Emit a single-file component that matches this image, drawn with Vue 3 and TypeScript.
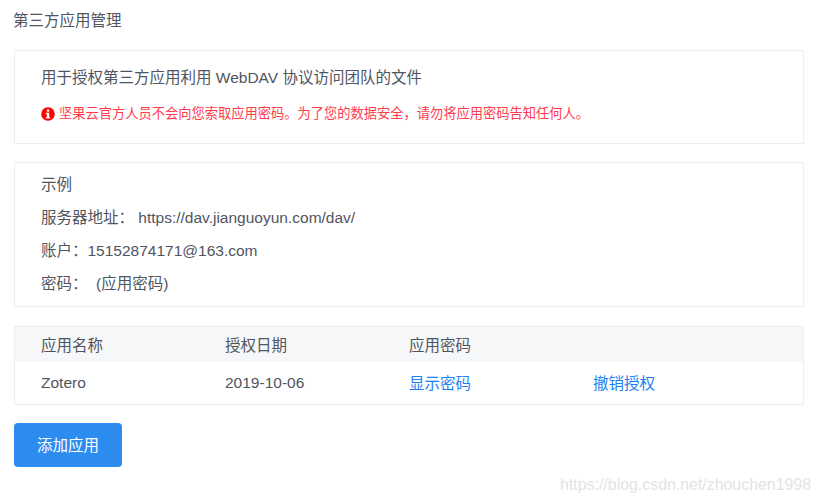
<template>
  <div class="page">
    <h3 class="title">第三方应用管理</h3>

    <section class="box intro">
      <p class="intro-text">用于授权第三方应用利用 WebDAV 协议访问团队的文件</p>
      <p class="warning">
        <svg class="warning-icon" viewBox="0 0 14 14" aria-hidden="true">
          <circle cx="7" cy="7" r="6.8" fill="#ff0000" />
          <rect x="5.8" y="2.5" width="2.4" height="2.2" fill="#fff" />
          <path d="M4.8 5.7h3.4v4.6h1.1v1.3H4.8v-1.3h1V7h-1z" fill="#fff" />
        </svg>
        <span>坚果云官方人员不会向您索取应用密码。为了您的数据安全，请勿将应用密码告知任何人。</span>
      </p>
    </section>

    <section class="box example">
      <p v-for="line in exampleLines" :key="line">{{ line }}</p>
    </section>

    <section class="box table">
      <div class="row head">
        <span v-for="col in columns" :key="col">{{ col }}</span>
        <span></span>
      </div>
      <div v-for="app in apps" :key="app.name" class="row body">
        <span>{{ app.name }}</span>
        <span>{{ app.date }}</span>
        <a class="link">显示密码</a>
        <a class="link">撤销授权</a>
      </div>
    </section>

    <button class="add-btn" type="button">添加应用</button>

    <div class="watermark">https://blog.csdn.net/zhouchen1998</div>
  </div>
</template>

<script setup lang="ts">
interface App {
  name: string;
  date: string;
}

const exampleLines: string[] = [
  "示例",
  "服务器地址： https://dav.jianguoyun.com/dav/",
  "账户：15152874171@163.com",
  "密码：  (应用密码)",
];

const columns: string[] = ["应用名称", "授权日期", "应用密码"];

const apps: App[] = [{ name: "Zotero", date: "2019-10-06" }];
</script>

<style>
html,
body {
  margin: 0;
  background: #fff;
}
</style>

<style scoped>
.page {
  position: relative;
  box-sizing: border-box;
  width: 820px;
  height: 503px;
  overflow: hidden;
  padding: 11px 16px 0 14px;
  color: #50555f;
  font-family: "Liberation Sans", "Noto Sans CJK SC", sans-serif;
  font-size: 15.5px;
}

.title {
  margin: 0 0 20px -1px;
  font-size: 15.5px;
  font-weight: 400;
  line-height: 19px;
}

.box {
  box-sizing: border-box;
  border: 1px solid #eeeeee;
}

.intro {
  height: 94px;
  margin-bottom: 18px;
  padding: 17px 26px 0;
}

.intro-text {
  margin: 0 0 18px;
  line-height: 19px;
}

.warning {
  display: flex;
  align-items: center;
  gap: 4px;
  margin: 0;
  color: #ff3b4e;
  font-size: 13.25px;
  line-height: 18px;
}

.warning-icon {
  width: 14px;
  height: 14px;
  flex-shrink: 0;
}

.example {
  display: flex;
  flex-direction: column;
  gap: 14px;
  height: 145px;
  margin-bottom: 19px;
  padding: 12px 26px 0;
}

.example p {
  margin: 0;
  line-height: 19px;
  white-space: pre;
}

.row {
  display: grid;
  grid-template-columns: repeat(4, 184px);
  align-items: center;
  padding-left: 26px;
}

.head {
  box-sizing: border-box;
  height: 35px;
  padding-bottom: 2px;
  background: #f6f7f9;
}

.body {
  height: 42px;
}

.link {
  margin-bottom: 3px;
  color: #1a82f5;
  cursor: pointer;
}

.table {
  height: 79px;
  margin-bottom: 18px;
}

.add-btn {
  display: block;
  width: 108px;
  height: 44px;
  padding: 0 0 2px;
  border: 0;
  border-radius: 4px;
  background: #2d8cf0;
  color: #fff;
  font: inherit;
  cursor: pointer;
}

.watermark {
  position: absolute;
  right: 9px;
  top: 476px;
  color: #e3e3e3;
  font-size: 15.9px;
  line-height: 18px;
}
</style>
